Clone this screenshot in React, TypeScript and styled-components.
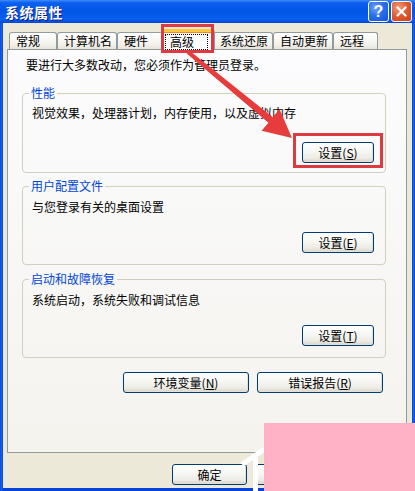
import styled, { createGlobalStyle, css } from 'styled-components'

const GlobalStyle = createGlobalStyle`
  html, body {
    margin: 0;
    padding: 0;
    background: #ece9d8;
  }
  body {
    width: 415px;
    height: 491px;
    overflow: hidden;
    font-family: 'Noto Sans CJK SC', 'Noto Sans', sans-serif;
    font-size: 12px;
    color: #000;
  }
`

const Window = styled.div`
  position: relative;
  width: 415px;
  height: 491px;
  display: flex;
  flex-direction: column;
  background: linear-gradient(90deg, #0831d9 0, #166aee 1px, #0843d8 3px, #0843d8 412px, #166aee 414px, #0831d9 415px);
  overflow: hidden;
`

const TitleBar = styled.div`
  height: 23px;
  flex: none;
  display: flex;
  align-items: center;
  padding: 0 3px 0 5px;
  background: linear-gradient(180deg, #3d8cf7 0%, #0c5ff0 12%, #0256e6 45%, #0a5ef0 85%, #0447d2 100%);
`

const Title = styled.div`
  flex: 1;
  color: #fff;
  font-weight: bold;
  font-size: 14px;
  line-height: 16px;
  letter-spacing: 0.5px;
  text-shadow: 1px 1px 0 #0a1883;
`

const CaptionButton = styled.div<{ $kind: 'help' | 'close' }>`
  width: 21px;
  height: 21px;
  margin-left: 2px;
  box-sizing: border-box;
  border: 1px solid #fff;
  border-radius: 3px;
  display: flex;
  align-items: center;
  justify-content: center;
  color: #fff;
  font: bold 16px 'Liberation Sans', sans-serif;
  ${({ $kind }) =>
    $kind === 'help'
      ? css`
          background: radial-gradient(circle at 35% 30%, #6ea2ff 0%, #2a6ff0 45%, #1652d6 100%);
        `
      : css`
          background: radial-gradient(circle at 35% 30%, #f39a7c 0%, #e0582f 50%, #c6401c 100%);
        `}
`

const Client = styled.div`
  flex: 1;
  margin: 0 3px 3px;
  background: #ece9d8;
  padding: 6px 0 0 4px;
  display: flex;
  flex-direction: column;
`

const TabStrip = styled.div`
  display: flex;
  align-items: flex-end;
  height: 20px;
  padding-left: 2px;
`

const Tab = styled.div<{ $w: number; $active?: boolean }>`
  position: relative;
  box-sizing: border-box;
  width: ${({ $w }) => $w}px;
  height: 17px;
  padding-left: 6px;
  border: 1px solid #919b9c;
  border-bottom: none;
  border-radius: 3px 3px 0 0;
  background: linear-gradient(180deg, #ffffff, #f3f2ec 70%, #e6e4da);
  line-height: 15px;
  white-space: nowrap;
  ${({ $active, $w }) =>
    $active &&
    css`
      z-index: 2;
      width: ${$w + 4}px;
      height: 21px;
      margin: 0 -2px -1px;
      padding-left: 4px;
      padding-top: 2px;
      background: #fcfcfe;
      border-top: 3px solid #ffc73c;
      box-shadow: inset 0 1px 0 #e68b2c;
      &::after {
        content: '';
        position: absolute;
        top: -8px;
        bottom: -3px;
        left: -1px;
        right: 0;
        border: 3px solid #dd3a42;
      }
    `}
`

const Focus = styled.span`
  display: inline-block;
  outline: 1px dotted #000;
  outline-offset: 0;
  padding: 0 13px 0 4px;
  line-height: 14px;
`

const Panel = styled.div`
  box-sizing: border-box;
  width: 400px;
  height: 404px;
  border: 1px solid #919b9c;
  background: linear-gradient(180deg, #fcfcfe, #f4f3ee);
  padding: 8px 0 0 14px;
  display: flex;
  flex-direction: column;
`

const Intro = styled.div`
  margin-left: 4px;
  line-height: 14px;
`

const Group = styled.fieldset<{ $top: number; $pt: number; $gap: number; $pb: number }>`
  box-sizing: border-box;
  width: 364px;
  margin: ${({ $top }) => $top}px 0 0;
  padding: ${({ $pt }) => $pt}px 11px ${({ $pb }) => $pb}px 9px;
  border: 1px solid #d0d0bf;
  border-radius: 4px;
  min-inline-size: 0;

  button {
    margin-top: ${({ $gap }) => $gap}px;
  }
`

const Legend = styled.legend`
  margin-left: -3px;
  padding: 0 2px;
  color: #0046d5;
  line-height: 14px;
`

const GroupBody = styled.div`
  display: flex;
  flex-direction: column;
`

const Desc = styled.div`
  line-height: 14px;
`

const Button = styled.button<{ $w: number; $marked?: boolean }>`
  position: relative;
  align-self: flex-end;
  box-sizing: border-box;
  width: ${({ $w }) => $w}px;
  height: 21px;
  padding: 0;
  border: 1px solid #003c74;
  border-radius: 3px;
  background: linear-gradient(180deg, #ffffff 0%, #f6f6f3 45%, #ecebe5 80%, #d8d2c6 100%);
  box-shadow: inset -1px -1px 0 #e3e0d6;
  font-family: 'Noto Sans CJK SC', 'Noto Sans', sans-serif;
  font-size: 12px;
  line-height: 18px;
  color: #000;
  ${({ $marked }) =>
    $marked &&
    css`
      &::after {
        content: '';
        position: absolute;
        top: -10px;
        bottom: -6px;
        left: -10px;
        right: -10px;
        border: 3px solid #dd3a42;
      }
    `}
`

const ButtonRow = styled.div<{ $top: number }>`
  display: flex;
  justify-content: flex-end;
  gap: 8px;
  width: 361px;
  margin-top: ${({ $top }) => $top}px;
`

const DialogButtons = styled.div`
  display: flex;
  justify-content: flex-end;
  gap: 6px;
  width: 402px;
  margin-top: 11px;
`

const Overlay = styled.svg`
  position: absolute;
  left: 0;
  top: 0;
  pointer-events: none;
  z-index: 5;
`

const Watermark = styled.div`
  position: absolute;
  left: 264px;
  top: 423px;
  width: 151px;
  height: 68px;
  background: #ffb1c5;
  z-index: 6;
`

const tabs = [
  { label: '常规', w: 48 },
  { label: '计算机名', w: 60 },
  { label: '硬件', w: 46 },
  { label: '高级', w: 50, active: true },
  { label: '系统还原', w: 60 },
  { label: '自动更新', w: 60 },
  { label: '远程', w: 45 },
]

const groups = [
  { title: '性能', desc: '视觉效果，处理器计划，内存使用，以及虚拟内存', key: 'S', top: 14, pt: 6, gap: 22, pb: 9, marked: true },
  { title: '用户配置文件', desc: '与您登录有关的桌面设置', key: 'E', top: 6, pt: 7, gap: 18, pb: 11 },
  { title: '启动和故障恢复', desc: '系统启动，系统失败和调试信息', key: 'T', top: 7, pt: 7, gap: 18, pb: 11 },
]

export default function App() {
  return (
    <>
      <GlobalStyle />
      <Window>
        <TitleBar>
          <Title>系统属性</Title>
          <CaptionButton $kind="help">?</CaptionButton>
          <CaptionButton $kind="close">
            <svg width="11" height="11" viewBox="0 0 11 11">
              <path d="M1.5 1.5 L9.5 9.5 M9.5 1.5 L1.5 9.5" stroke="#fff" strokeWidth="2.2" strokeLinecap="round" />
            </svg>
          </CaptionButton>
        </TitleBar>
        <Client>
          <TabStrip>
            {tabs.map((t) => (
              <Tab key={t.label} $w={t.w} $active={t.active}>
                {t.active ? <Focus>{t.label}</Focus> : t.label}
              </Tab>
            ))}
          </TabStrip>
          <Panel>
            <Intro>要进行大多数改动，您必须作为管理员登录。</Intro>
            {groups.map((g) => (
              <Group key={g.title} $top={g.top} $pt={g.pt} $gap={g.gap} $pb={g.pb}>
                <Legend>{g.title}</Legend>
                <GroupBody>
                  <Desc>{g.desc}</Desc>
                  <Button type="button" $w={72} $marked={g.marked}>
                    设置(<u>{g.key}</u>)
                  </Button>
                </GroupBody>
              </Group>
            ))}
            <ButtonRow $top={14}>
              <Button type="button" $w={126}>
                环境变量(<u>N</u>)
              </Button>
              <Button type="button" $w={126}>
                错误报告(<u>R</u>)
              </Button>
            </ButtonRow>
          </Panel>
          <DialogButtons>
            <Button type="button" $w={75}>确定</Button>
            <Button type="button" $w={75}>取消</Button>
            <Button type="button" $w={75}>
              应用(<u>A</u>)
            </Button>
          </DialogButtons>
        </Client>
        <Overlay width="415" height="491" viewBox="0 0 415 491">
          <polygon
            points="186.7,53.5 268.4,122.7 261.6,130.7 292,138 279.6,109.3 272.8,117.3 189.3,50.5"
            fill="#e63c3c"
          />
          <polygon points="240,463 263,447 265,452 244,466" fill="#fff" />
          <rect x="253" y="458" width="5" height="33" fill="#fff" />
        </Overlay>
        <Watermark />
      </Window>
    </>
  )
}
